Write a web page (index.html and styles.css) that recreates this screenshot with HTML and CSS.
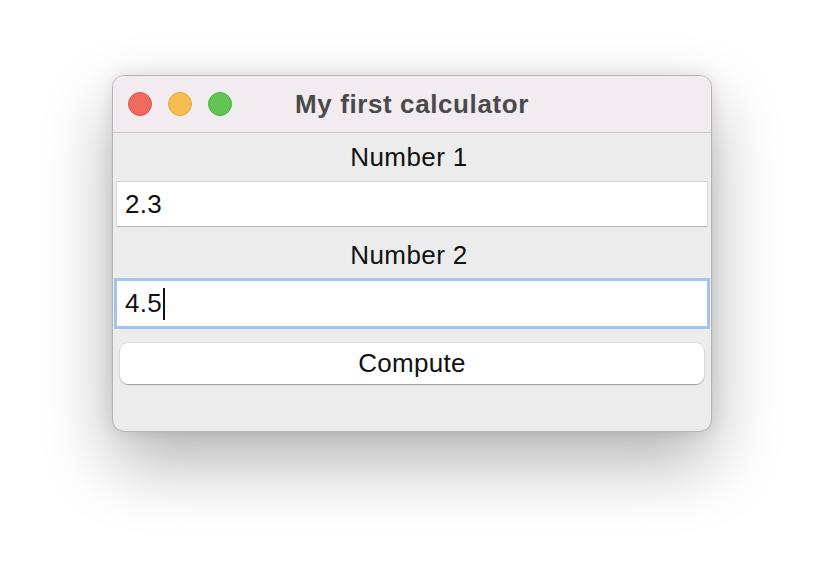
FILE: index.html
```html
<!DOCTYPE html>
<html>
<head>
<meta charset="utf-8">
<link rel="stylesheet" href="styles.css">
</head>
<body>
<div class="window">
  <div class="titlebar">
    <div class="lights">
      <span class="light red"></span>
      <span class="light yellow"></span>
      <span class="light green"></span>
    </div>
    <div class="title">My first calculator</div>
  </div>
  <div class="content">
    <div class="label">Number 1</div>
    <div class="entry">2.3</div>
    <div class="label label2">Number 2</div>
    <div class="entry focused">4.5<span class="caret"></span></div>
    <div class="button">Compute</div>
  </div>
</div>
</body>
</html>
```
FILE: styles.css
```css
html, body {
  margin: 0;
  padding: 0;
  background: #ffffff;
}
body {
  width: 824px;
  height: 580px;
  overflow: hidden;
  font-family: "Liberation Sans", Arial, sans-serif;
}
.window {
  margin: 75px 0 0 112px;
  width: 600px;
  height: 357px;
  box-sizing: border-box;
  border-radius: 12px;
  background: #ececec;
  border: 1px solid #b4b4b4;
  box-shadow: 0 30px 70px rgba(0,0,0,0.30), 0 0 16px rgba(0,0,0,0.10);
  overflow: hidden;
  display: flex;
  flex-direction: column;
}
.titlebar {
  position: relative;
  height: 56px;
  flex: none;
  background: #f2ecf0;
  border-bottom: 1px solid #cbc8ca;
  display: flex;
  align-items: center;
}
.lights {
  display: flex;
  gap: 16px;
  padding-left: 15px;
}
.light {
  width: 24px;
  height: 24px;
  border-radius: 50%;
  box-sizing: border-box;
}
.red { background: #ee6a5f; border: 1px solid #d6564c; }
.yellow { background: #f6be50; border: 1px solid #dea63c; }
.green { background: #62c554; border: 1px solid #4fae43; }
.title {
  position: absolute;
  left: 0;
  right: 0;
  top: 0;
  bottom: 0;
  display: flex;
  align-items: center;
  justify-content: center;
  font-weight: bold;
  font-size: 26px;
  letter-spacing: 0.6px;
  color: #4b4a4b;
}
.content {
  display: flex;
  flex-direction: column;
  padding: 0 4px;
}
.label {
  height: 48px;
  display: flex;
  align-items: center;
  justify-content: center;
  padding-right: 6px;
  font-size: 26px;
  letter-spacing: 0.4px;
  color: #111;
}
.label2 {
  height: 50px;
  padding-top: 7px;
  box-sizing: border-box;
}
.entry {
  height: 46px;
  box-sizing: border-box;
  background: #fff;
  border-top: 1px solid #d6d6d6;
  border-bottom: 1px solid #b8b8b8;
  box-shadow: -1px 0 0 #dcdcdc, 1px 0 0 #dcdcdc;
  display: flex;
  align-items: center;
  padding-left: 8px;
  font-size: 26px;
  letter-spacing: 0.3px;
  color: #111;
}
.entry.focused {
  margin-top: 4px;
  height: 45px;
  border: none;
  box-shadow: 0 0 0 3px #a4c3ee;
}
.caret {
  display: inline-block;
  width: 2px;
  height: 32px;
  background: #111;
  margin-left: 1px;
}
.button {
  margin: 17px 3px 0 3px;
  height: 41px;
  box-sizing: border-box;
  background: #fff;
  border-radius: 8px;
  box-shadow: 0 1px 1px rgba(0,0,0,0.28), 0 0 0 0.5px rgba(0,0,0,0.12);
  display: flex;
  align-items: center;
  justify-content: center;
  font-size: 26px;
  letter-spacing: 0.3px;
  color: #111;
}
```
